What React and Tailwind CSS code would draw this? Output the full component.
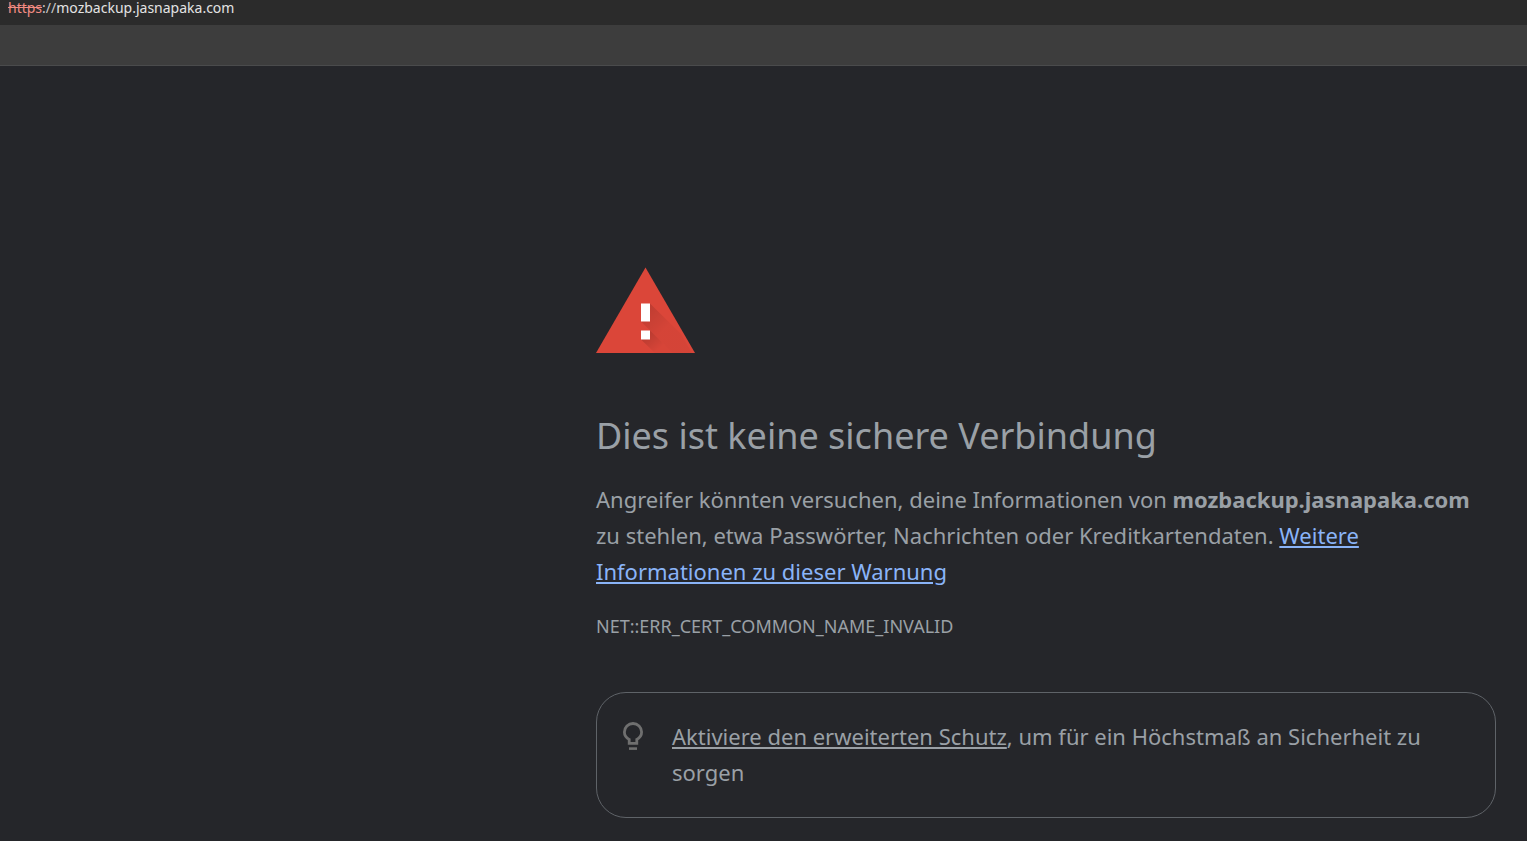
const WarningIcon = ({ className = "" }) => (
  <svg viewBox="0 0 99 86" className={className} aria-hidden="true">
    <defs>
      <linearGradient id="shade" gradientUnits="userSpaceOnUse" x1="48" y1="43" x2="68" y2="63">
        <stop offset="0" stopColor="#000" stopOpacity="0.13" />
        <stop offset="1" stopColor="#000" stopOpacity="0.03" />
      </linearGradient>
      <linearGradient id="shadeDot" gradientUnits="userSpaceOnUse" x1="48" y1="70" x2="60" y2="84">
        <stop offset="0" stopColor="#000" stopOpacity="0.15" />
        <stop offset="1" stopColor="#000" stopOpacity="0.02" />
      </linearGradient>
    </defs>
    <path d="M49.5 0.5 99 86H0z" fill="#db4639" />
    <path d="M54 36.5 85 67 96 86H77L45 54.5z" fill="url(#shade)" />
    <path d="M54 63.5 77 86H59L45 72.5z" fill="url(#shadeDot)" />
    <path d="M45 36.5h9v18h-9zM45 63.5h9v9h-9z" fill="#fff" />
  </svg>
);

const BulbIcon = ({ className = "" }) => (
  <svg viewBox="0 0 20 28" className={className} fill="none" stroke="#6f6f6f" aria-hidden="true">
    <path
      d="M6.2 21.3v-3.9C3.4 16 1.4 13.4 1.4 10.1a8.6 8.6 0 0 1 17.2 0c0 3.3-2 5.9-4.8 7.3v3.9z"
      strokeWidth="2.8"
    />
    <path d="M6 26.6h8" strokeWidth="2.6" />
  </svg>
);

export default function App() {
  return (
    <div className="min-h-screen overflow-x-hidden bg-[#25262a] font-['Noto_Sans',sans-serif] text-[#9aa0a6]">
      {/* address bar */}
      <header>
        <div className="h-[25px] bg-[#2b2b2b] px-2 text-[14px] leading-[16px] text-[#e3e3e3]">
          <span className="text-[#f28b82] line-through">https</span>
          <span className="text-[#c7c7c7]">://</span>
          mozbackup.jasnapaka.com
        </div>
        <div className="h-[41px] border-b border-[#4a4b4c] bg-[#3d3d3d]" />
      </header>

      {/* certificate warning */}
      <main className="mr-[31px] ml-auto max-w-[900px] pt-[201px] pb-[23px]">
        <WarningIcon className="h-[86px] w-[99px]" />
        <h1 className="mt-[60px] text-[36px] leading-[45px]">Dies ist keine sichere Verbindung</h1>
        <p className="mt-[23px] text-[22px] leading-[36px]">
          Angreifer könnten versuchen, deine Informationen von <strong>mozbackup.jasnapaka.com</strong> zu
          stehlen, etwa Passwörter, Nachrichten oder Kreditkartendaten.{" "}
          <a href="#" className="text-[#8ab4f8] underline">
            Weitere Informationen zu dieser Warnung
          </a>
        </p>
        <p className="mt-[25px] text-[18px] leading-[24px]">NET::ERR_CERT_COMMON_NAME_INVALID</p>

        <div className="mt-[54px] flex gap-[29px] rounded-[30px] border border-[#5f6368] pt-[25px] pr-6 pb-[27px] pl-[26px]">
          <BulbIcon className="mt-1 h-[28px] w-[20px] shrink-0" />
          <p className="text-[22px] leading-[36px]">
            <a href="#" className="underline">
              Aktiviere den erweiterten Schutz
            </a>
            , um für ein Höchstmaß an Sicherheit zu sorgen
          </p>
        </div>
      </main>
    </div>
  );
}
